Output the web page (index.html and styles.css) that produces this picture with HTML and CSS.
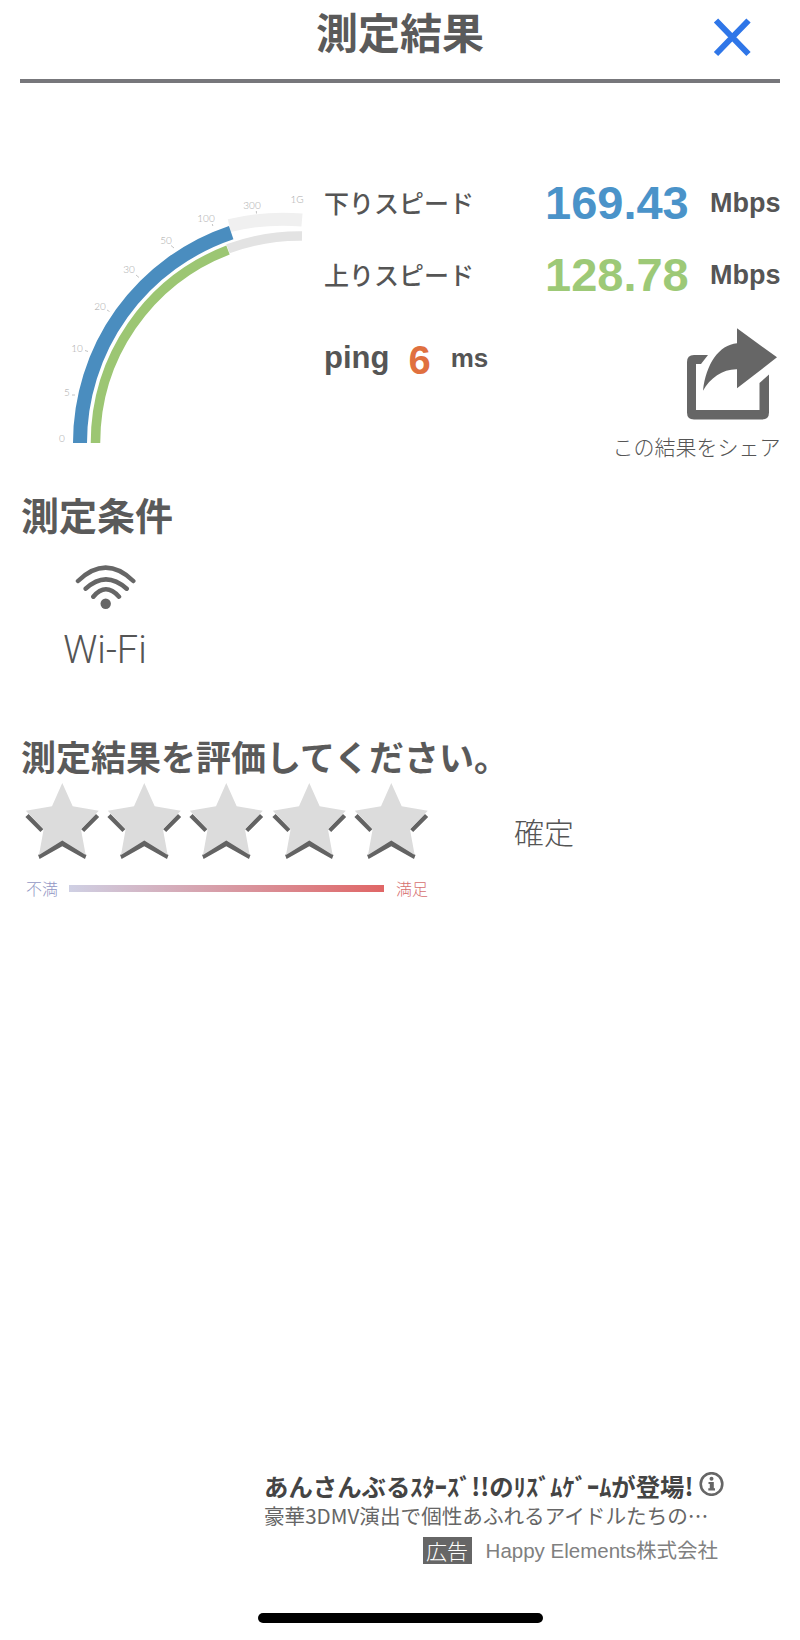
FILE: index.html
```html
<!DOCTYPE html>
<html lang="ja">
<head>
<meta charset="utf-8">
<title>測定結果</title>
<link rel="stylesheet" href="styles.css">
</head>
<body>
<svg class="defs" width="0" height="0" aria-hidden="true">
  <symbol id="star" viewBox="0 0 82.2 90">
    <path class="star-dark" d="M7 37.500 22 52.500M77.600 37.500 62.600 52.500"/>
    <polygon class="star-chevron" points="42.300,60 66.500,77 65,81 42.300,68.300 19.600,81 18.100,77"/>
    <polygon class="star-fill" points="42.300,5 52.700,28.300 78.800,32.700 61,51.500 65.700,77 42.300,62.500 19,77 23.600,51.500 5.800,32.700 32,28.300"/>
  </symbol>
</svg>
<main class="page">
  <header class="topbar">
    <span></span>
    <h1 class="page-title">測定結果</h1>
    <svg class="close" viewBox="0 0 40 40"><path d="M3 2.500 35.500 36M35.500 2.500 3 36"/></svg>
  </header>

  <section class="result">
    <svg class="gauge" viewBox="0 167 305 278">
      <path class="track-a" d="M229.300 225.600A229 229 0 0 1 302 220"/>
      <path class="track-b" d="M228 248.800A206.500 206.500 0 0 1 302 236"/>
      <path class="arc-down" d="M80 443A222 222 0 0 1 231.200 232.600"/>
      <path class="arc-up" d="M95.500 443A206.500 206.500 0 0 1 228 250"/>
      <path class="tick" d="M72 395H75M85 350.500 88 351.500M107 310 109.500 311.500M136 275 139 277.500M171 245.500 174 248M212.300 224 212.800 226M256.300 211 256.500 213.500"/>
      <text class="tick-label" x="62" y="441.500">0</text>
      <text class="tick-label" x="67" y="395.500">5</text>
      <text class="tick-label" x="77" y="351.500">10</text>
      <text class="tick-label" x="100" y="309.500">20</text>
      <text class="tick-label" x="129" y="272.500">30</text>
      <text class="tick-label" x="166" y="243.500">50</text>
      <text class="tick-label" x="206" y="221.500">100</text>
      <text class="tick-label" x="252" y="208.500">300</text>
      <text class="tick-label" x="297" y="202.500">1G</text>
    </svg>

    <div class="numbers">
      <div class="speed-row">
        <span class="speed-label">下りスピード</span>
        <span class="speed-value down">169.43</span>
        <span class="speed-unit">Mbps</span>
      </div>
      <div class="speed-row">
        <span class="speed-label">上りスピード</span>
        <span class="speed-value up">128.78</span>
        <span class="speed-unit">Mbps</span>
      </div>
      <div class="lower-row">
        <div class="ping">
          <span class="ping-label">ping</span>
          <span class="ping-value">6</span>
          <span class="ping-unit">ms</span>
        </div>
        <div class="share">
          <svg class="share-icon" viewBox="10 8 92 92">
            <path d="M31 35H17Q10 35 10 42V92.500Q10 99.500 17 99.500H85Q92 99.500 92 92.500V54.500L82.500 63V90H19V44H24Z"/>
            <path d="M60 8.300 100 37.300 60 68.300V49.300C46 49 33 58 26 70.700 29 44 42 25 60 23.300Z"/>
          </svg>
          <span class="share-text">この結果をシェア</span>
        </div>
      </div>
    </div>
  </section>

  <h2 class="section-title">測定条件</h2>
  <div class="condition">
    <svg class="wifi" viewBox="0 0 80 60">
      <path d="M13 25Q40.700 -1.600 68.300 25M20.700 32.700Q40.700 13.900 61.700 32.700M28.300 40.700Q40.700 25.900 54 40.700"/>
      <circle cx="40.700" cy="47.700" r="5.200"/>
    </svg>
    <span class="condition-name">Wi-Fi</span>
  </div>

  <h2 class="rate-title">測定結果を評価してください。</h2>
  <div class="rate-row">
    <div class="stars">
      <svg class="star"><use href="#star"/></svg>
      <svg class="star"><use href="#star"/></svg>
      <svg class="star"><use href="#star"/></svg>
      <svg class="star"><use href="#star"/></svg>
      <svg class="star"><use href="#star"/></svg>
    </div>
    <span class="confirm">確定</span>
  </div>
  <div class="scale">
    <span class="scale-low">不満</span>
    <span class="scale-bar"></span>
    <span class="scale-high">満足</span>
  </div>

  <aside class="ad">
    <div class="ad-head">
      <span class="ad-title">あんさんぶるｽﾀｰｽﾞ!!のﾘｽﾞﾑｹﾞｰﾑが登場!</span>
      <svg class="ad-info" viewBox="0 0 25 24">
        <circle class="info-ring" cx="12.500" cy="12" r="10.800"/>
        <circle class="info-mark" cx="12.500" cy="6.800" r="2"/>
        <path class="info-mark" d="M9.500 10H14.800V16.300H16V18.500H9.300V16.300H10.800V12H9.500Z"/>
      </svg>
    </div>
    <p class="ad-body">豪華3DMV演出で個性あふれるアイドルたちの…</p>
    <div class="ad-foot">
      <span class="ad-badge">広告</span>
      <span class="ad-sponsor">Happy Elements株式会社</span>
    </div>
  </aside>

  <div class="home-bar"></div>
</main>
</body>
</html>
```

FILE: styles.css
```css
* { box-sizing: border-box; }

html, body {
  margin: 0;
  padding: 0;
  background: #fff;
}

body {
  font-family: "Noto Sans CJK JP", "Liberation Sans", sans-serif;
  color: #555;
}

.defs { position: absolute; }

.page {
  width: 800px;
  height: 1640px;
  display: flex;
  flex-direction: column;
  overflow: hidden;
}

/* header */
.topbar {
  height: 83px;
  margin: 0 20px;
  border-bottom: 4px solid #77777b;
  display: grid;
  grid-template-columns: 1fr auto 1fr;
}

.page-title {
  margin: 0;
  font-size: 42px;
  font-weight: 700;
  line-height: 62px;
  color: #5a5a5a;
}

.close {
  width: 40px;
  height: 40px;
  justify-self: end;
  margin: 18px 27px 0 0;
}

.close path {
  fill: none;
  stroke: #2f76e8;
  stroke-width: 6;
}

/* result */
.result {
  display: flex;
  margin-top: 84px;
}

.gauge {
  width: 305px;
  height: 278px;
  flex: none;
}

.gauge path { fill: none; }
.track-a { stroke: #f0f0f0; stroke-width: 13; }
.track-b { stroke: #e3e3e3; stroke-width: 9.5; }
.arc-down { stroke: #4a8dbf; stroke-width: 14; }
.arc-up { stroke: #9cc673; stroke-width: 9.5; }
.gauge .tick { stroke: #c4c4c4; stroke-width: 1; }

.tick-label {
  font-family: Lato, "Liberation Sans", sans-serif;
  font-size: 10px;
  font-weight: 300;
  fill: #a8a8a8;
  text-anchor: middle;
}

.numbers {
  flex: 1;
  margin-left: 19px;
  padding-right: 21px;
}

.speed-row {
  height: 72px;
  display: flex;
  align-items: center;
}

.speed-label {
  width: 221px;
  padding-bottom: 3px;
  font-size: 25px;
  font-weight: 500;
  line-height: 30px;
  color: #555;
}

.speed-value,
.speed-unit,
.ping {
  font-family: "Liberation Sans", sans-serif;
  font-weight: 700;
}

.speed-value {
  width: 165px;
  font-size: 47px;
  line-height: 50px;
}

.speed-value.down { color: #4a93c9; }
.speed-value.up { color: #9dc977; }

.speed-unit {
  font-size: 27px;
  line-height: 30px;
  color: #555;
}

.lower-row {
  display: flex;
  justify-content: space-between;
  align-items: flex-start;
}

.ping {
  display: flex;
  align-items: center;
  height: 44px;
  margin-top: 25px;
  color: #555;
}

.ping-label { font-size: 31px; }

.ping-value {
  margin-left: 19px;
  padding-top: 4px;
  font-size: 40px;
  color: #e0703f;
}

.ping-unit {
  margin-left: 20px;
  font-size: 26px;
}

.share {
  display: flex;
  flex-direction: column;
  align-items: flex-end;
  margin-top: 17px;
}

.share-icon {
  width: 92px;
  height: 92px;
  margin-right: 2px;
}

.share-icon path { fill: #666; }

.share-text {
  margin-top: 11px;
  font-size: 21px;
  font-weight: 300;
  line-height: 30px;
  white-space: nowrap;
}

/* condition */
.section-title {
  margin: 30px 0 0 21px;
  font-size: 38px;
  font-weight: 700;
  line-height: 46px;
  color: #5a5a5a;
}

.condition {
  width: 80px;
  margin: 18.500px 0 0 65px;
  display: flex;
  flex-direction: column;
  align-items: center;
}

.wifi {
  width: 80px;
  height: 60px;
}

.wifi path {
  fill: none;
  stroke: #666;
  stroke-width: 4.500;
  stroke-linecap: round;
}

.wifi circle { fill: #666; }

.condition-name {
  margin-top: 12.500px;
  font-family: Roboto, "Liberation Sans", sans-serif;
  font-size: 38px;
  font-weight: 300;
  line-height: 44px;
  color: #555;
  white-space: nowrap;
}

/* rating */
.rate-title {
  margin: 62px 0 0 21px;
  font-size: 35px;
  font-weight: 700;
  line-height: 44px;
  color: #5a5a5a;
  white-space: nowrap;
}

.rate-row {
  display: flex;
  align-items: flex-start;
  padding-left: 20px;
}

.stars { display: flex; }

.star {
  width: 82.200px;
  height: 90px;
  overflow: visible;
}

.star-fill { fill: #dcdcdc; }
.star-chevron { fill: #636363; }

.star-dark {
  fill: none;
  stroke: #636363;
  stroke-width: 4.500;
}

.confirm {
  margin: 31px 0 0 83px;
  font-size: 30px;
  font-weight: 300;
  line-height: 44px;
  color: #555;
}

.scale {
  display: flex;
  align-items: center;
  height: 24px;
  margin: 8px 0 0 26px;
  font-size: 16px;
  font-weight: 300;
  line-height: 24px;
}

.scale-low { width: 43px; color: #9297c4; }

.scale-bar {
  width: 315px;
  height: 7px;
  background: linear-gradient(to right, #cfd0e4, #e06666);
}

.scale-high {
  margin-left: 12px;
  color: #d66f6f;
}

/* ad */
.ad {
  margin-top: auto;
  padding-left: 264px;
}

.ad-head {
  display: flex;
  align-items: flex-start;
  height: 29px;
}

.ad-title {
  font-size: 24.400px;
  font-weight: 700;
  line-height: 25px;
  color: #444;
  white-space: nowrap;
}

.ad-info {
  width: 25px;
  height: 24px;
  margin: -1px 0 0 5px;
}

.info-ring { fill: none; stroke: #666; stroke-width: 2.600; }
.info-mark { fill: #666; }

.ad-body {
  margin: 0;
  font-size: 20.600px;
  line-height: 27px;
  font-weight: 400;
  color: #666;
  white-space: nowrap;
}

.ad-foot {
  display: flex;
  justify-content: flex-end;
  align-items: center;
  gap: 14px;
  margin-top: 8px;
  padding-right: 82px;
}

.ad-badge {
  width: 49px;
  height: 27px;
  background: #666;
  color: #fff;
  font-size: 21px;
  line-height: 27px;
  font-weight: 300;
  text-align: center;
}

.ad-sponsor {
  font-size: 20.500px;
  line-height: 27px;
  color: #808080;
  font-family: "Liberation Sans", "Noto Sans CJK JP", sans-serif;
  white-space: nowrap;
}

.home-bar {
  width: 285px;
  height: 10px;
  margin: 49px 0 17px 258px;
  border-radius: 5px;
  background: #000;
  flex: none;
}
```
